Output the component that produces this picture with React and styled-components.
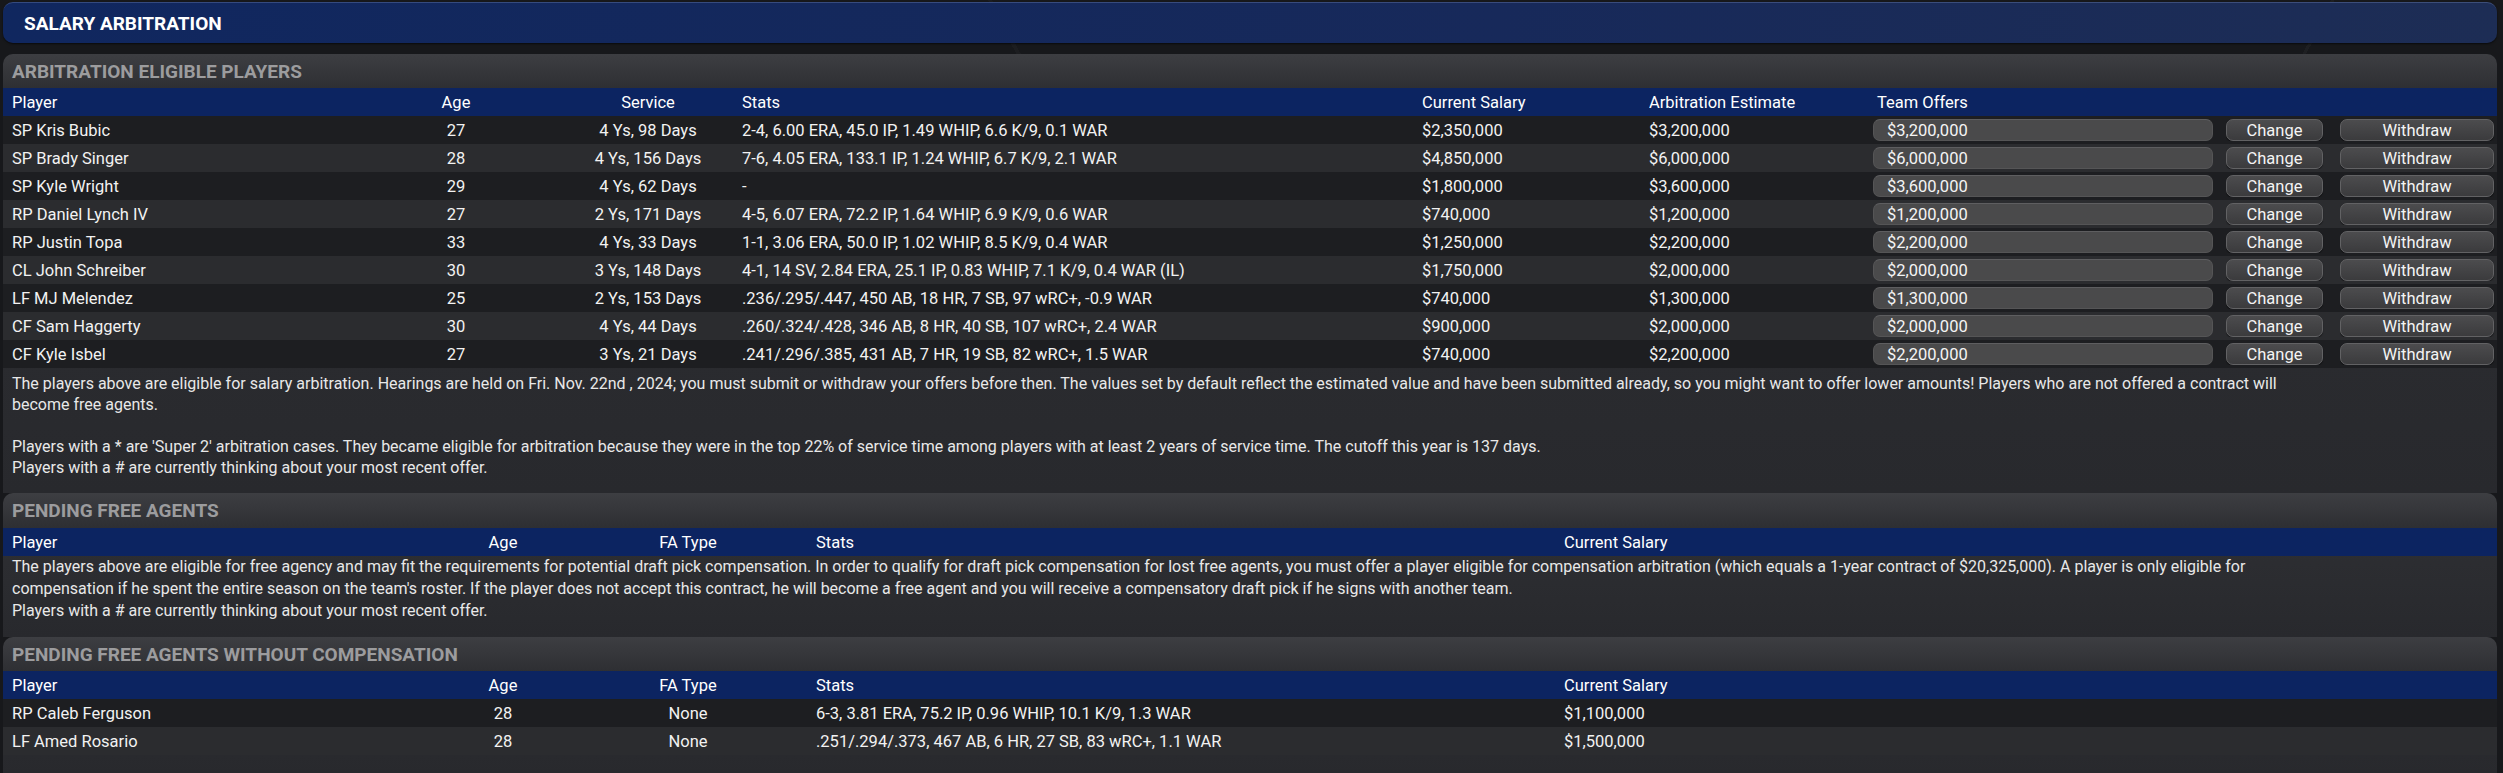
import styled, { createGlobalStyle } from "styled-components";

const GlobalStyle = createGlobalStyle`
  html, body {
    margin: 0;
    padding: 0;
    background: #17181b;
  }
  body {
    font-family: Roboto, "Liberation Sans", Arial, sans-serif;
    font-size: 16px;
    color: #f0f0f0;
  }
`;

const arbCols = "341px 224px 160px 694px 227px 224px 353px 114px 1fr";
const faCols = "427px 146px 224px 764px 1fr";

const arbPlayers = [
  ["SP Kris Bubic", "27", "4 Ys, 98 Days", "2-4, 6.00 ERA, 45.0 IP, 1.49 WHIP, 6.6 K/9, 0.1 WAR", "$2,350,000", "$3,200,000", "$3,200,000"],
  ["SP Brady Singer", "28", "4 Ys, 156 Days", "7-6, 4.05 ERA, 133.1 IP, 1.24 WHIP, 6.7 K/9, 2.1 WAR", "$4,850,000", "$6,000,000", "$6,000,000"],
  ["SP Kyle Wright", "29", "4 Ys, 62 Days", "-", "$1,800,000", "$3,600,000", "$3,600,000"],
  ["RP Daniel Lynch IV", "27", "2 Ys, 171 Days", "4-5, 6.07 ERA, 72.2 IP, 1.64 WHIP, 6.9 K/9, 0.6 WAR", "$740,000", "$1,200,000", "$1,200,000"],
  ["RP Justin Topa", "33", "4 Ys, 33 Days", "1-1, 3.06 ERA, 50.0 IP, 1.02 WHIP, 8.5 K/9, 0.4 WAR", "$1,250,000", "$2,200,000", "$2,200,000"],
  ["CL John Schreiber", "30", "3 Ys, 148 Days", "4-1, 14 SV, 2.84 ERA, 25.1 IP, 0.83 WHIP, 7.1 K/9, 0.4 WAR (IL)", "$1,750,000", "$2,000,000", "$2,000,000"],
  ["LF MJ Melendez", "25", "2 Ys, 153 Days", ".236/.295/.447, 450 AB, 18 HR, 7 SB, 97 wRC+, -0.9 WAR", "$740,000", "$1,300,000", "$1,300,000"],
  ["CF Sam Haggerty", "30", "4 Ys, 44 Days", ".260/.324/.428, 346 AB, 8 HR, 40 SB, 107 wRC+, 2.4 WAR", "$900,000", "$2,000,000", "$2,000,000"],
  ["CF Kyle Isbel", "27", "3 Ys, 21 Days", ".241/.296/.385, 431 AB, 7 HR, 19 SB, 82 wRC+, 1.5 WAR", "$740,000", "$2,200,000", "$2,200,000"],
];

const noCompPlayers = [
  ["RP Caleb Ferguson", "28", "None", "6-3, 3.81 ERA, 75.2 IP, 0.96 WHIP, 10.1 K/9, 1.3 WAR", "$1,100,000"],
  ["LF Amed Rosario", "28", "None", ".251/.294/.373, 467 AB, 6 HR, 27 SB, 83 wRC+, 1.1 WAR", "$1,500,000"],
];

const App = () => {
  return (
    <Page>
      <GlobalStyle />
      <TitleBar>SALARY ARBITRATION</TitleBar>

      <Section>
        <SectionHeading>ARBITRATION ELIGIBLE PLAYERS</SectionHeading>
        <HeaderRow $cols={arbCols}>
          <Cell>Player</Cell>
          <Cell $align="center">Age</Cell>
          <Cell $align="center">Service</Cell>
          <Cell $pad={14}>Stats</Cell>
          <Cell $pad={0}>Current Salary</Cell>
          <Cell $pad={0}>Arbitration Estimate</Cell>
          <Cell $pad={4}>Team Offers</Cell>
          <Cell />
          <Cell />
        </HeaderRow>
        {arbPlayers.map((p, i) => (
          <Row key={p[0]} $cols={arbCols} $alt={i % 2 === 1}>
            <Cell>{p[0]}</Cell>
            <Cell $align="center">{p[1]}</Cell>
            <Cell $align="center">{p[2]}</Cell>
            <Cell $pad={14}>{p[3]}</Cell>
            <Cell $pad={0}>{p[4]}</Cell>
            <Cell $pad={0}>{p[5]}</Cell>
            <Cell $pad={0}>
              <OfferBox>{p[6]}</OfferBox>
            </Cell>
            <Cell $pad={0}>
              <Button $w={97}>Change</Button>
            </Cell>
            <Cell $pad={0}>
              <Button $w={154}>Withdraw</Button>
            </Cell>
          </Row>
        ))}
        <Note $top={5} $bottom={15} $lh={21}>
          The players above are eligible for salary arbitration. Hearings are held on Fri. Nov. 22nd , 2024; you must submit or withdraw your offers before then. The values set by default reflect the estimated value and have been submitted already, so you might want to offer lower amounts! Players who are not offered a contract will
          <br />
          become free agents.
          <br />
          <br />
          Players with a * are 'Super 2' arbitration cases. They became eligible for arbitration because they were in the top 22% of service time among players with at least 2 years of service time. The cutoff this year is 137 days.
          <br />
          Players with a # are currently thinking about your most recent offer.
        </Note>
      </Section>

      <Section>
        <SectionHeading $h={35}>PENDING FREE AGENTS</SectionHeading>
        <HeaderRow $cols={faCols}>
          <Cell>Player</Cell>
          <Cell $align="center">Age</Cell>
          <Cell $align="center">FA Type</Cell>
          <Cell $pad={16}>Stats</Cell>
          <Cell $pad={0}>Current Salary</Cell>
        </HeaderRow>
        <Note $top={0} $bottom={15} $lh={22}>
          The players above are eligible for free agency and may fit the requirements for potential draft pick compensation. In order to qualify for draft pick compensation for lost free agents, you must offer a player eligible for compensation arbitration (which equals a 1-year contract of $20,325,000). A player is only eligible for
          <br />
          compensation if he spent the entire season on the team's roster. If the player does not accept this contract, he will become a free agent and you will receive a compensatory draft pick if he signs with another team.
          <br />
          Players with a # are currently thinking about your most recent offer.
        </Note>
      </Section>

      <Section $fill>
        <SectionHeading>PENDING FREE AGENTS WITHOUT COMPENSATION</SectionHeading>
        <HeaderRow $cols={faCols}>
          <Cell>Player</Cell>
          <Cell $align="center">Age</Cell>
          <Cell $align="center">FA Type</Cell>
          <Cell $pad={16}>Stats</Cell>
          <Cell $pad={0}>Current Salary</Cell>
        </HeaderRow>
        {noCompPlayers.map((p, i) => (
          <Row key={p[0]} $cols={faCols} $alt={i % 2 === 1}>
            <Cell>{p[0]}</Cell>
            <Cell $align="center">{p[1]}</Cell>
            <Cell $align="center">{p[2]}</Cell>
            <Cell $pad={16}>{p[3]}</Cell>
            <Cell $pad={0}>{p[4]}</Cell>
          </Row>
        ))}
      </Section>
    </Page>
  );
};

export default App;

const Page = styled.div`
  min-height: 773px;
  box-sizing: border-box;
  padding: 2px 6px 0 3px;
  display: flex;
  flex-direction: column;
  background-color: #17181b;
  background-image: linear-gradient(
      62deg,
      transparent 0 48%,
      rgba(255, 255, 255, 0.025) 48% 48.15%,
      transparent 48.15% 100%
    ),
    linear-gradient(
      118deg,
      transparent 0 80%,
      rgba(255, 255, 255, 0.03) 80% 80.12%,
      transparent 80.12% 100%
    );
`;

const TitleBar = styled.div`
  height: 41px;
  box-sizing: border-box;
  display: flex;
  align-items: center;
  padding-left: 21px;
  border-radius: 10px;
  background: linear-gradient(90deg, #10275f 0%, #17295a 60%, #1d2d55 100%);
  border-top: 1px solid rgba(120, 140, 190, 0.35);
  box-shadow: 0 1px 2px rgba(0, 0, 0, 0.6);
  font-size: 19px;
  font-weight: 700;
  color: #ffffff;
  margin-bottom: 11px;
`;

const Section = styled.div`
  display: flex;
  flex-direction: column;
  border-radius: 10px 10px 0 0;
  background: linear-gradient(
    180deg,
    #3d3e42 0px,
    #2e2f33 34px,
    #28292d 100%
  );
  ${(p) => p.$fill && "flex: 1;"}
`;

const SectionHeading = styled.div`
  height: ${(p) => p.$h || 34}px;
  display: flex;
  align-items: center;
  padding-left: 9px;
  font-size: 19px;
  font-weight: 700;
  color: #9c9c9e;
`;

const Row = styled.div`
  display: grid;
  grid-template-columns: ${(p) => p.$cols};
  height: 28px;
  align-items: center;
  font-size: 16.5px;
  background: ${(p) => (p.$alt ? "#2b2c2f" : "#1d1e21")};
  color: #f2f2f2;
`;

const HeaderRow = styled(Row)`
  background: #0c2461;
  color: #ffffff;
`;

const Cell = styled.div`
  padding-left: ${(p) => (p.$pad !== undefined ? p.$pad : p.$align === "center" ? 0 : 9)}px;
  text-align: ${(p) => p.$align || "left"};
  white-space: nowrap;
  overflow: hidden;
  display: flex;
  justify-content: ${(p) => (p.$align === "center" ? "center" : "flex-start")};
  align-items: center;
`;

const OfferBox = styled.div`
  width: 340px;
  height: 22px;
  box-sizing: border-box;
  padding-left: 13px;
  display: flex;
  align-items: center;
  border-radius: 7px;
  background: #4a4a4b;
  border: 1px solid #555556;
  border-top-color: #5e5e60;
  color: #f4f4f4;
`;

const Button = styled.div`
  width: ${(p) => p.$w}px;
  height: 22px;
  box-sizing: border-box;
  display: flex;
  align-items: center;
  justify-content: center;
  border-radius: 7px;
  background: linear-gradient(180deg, #4c4c4e 0%, #3b3b3d 100%);
  border: 1px solid #626264;
  box-shadow: 0 1px 1px rgba(0, 0, 0, 0.5);
  color: #f4f4f4;
  cursor: pointer;
`;

const Note = styled.div`
  padding: ${(p) => p.$top}px 9px ${(p) => p.$bottom}px 9px;
  line-height: ${(p) => p.$lh}px;
  color: #e8e8e8;
`;
